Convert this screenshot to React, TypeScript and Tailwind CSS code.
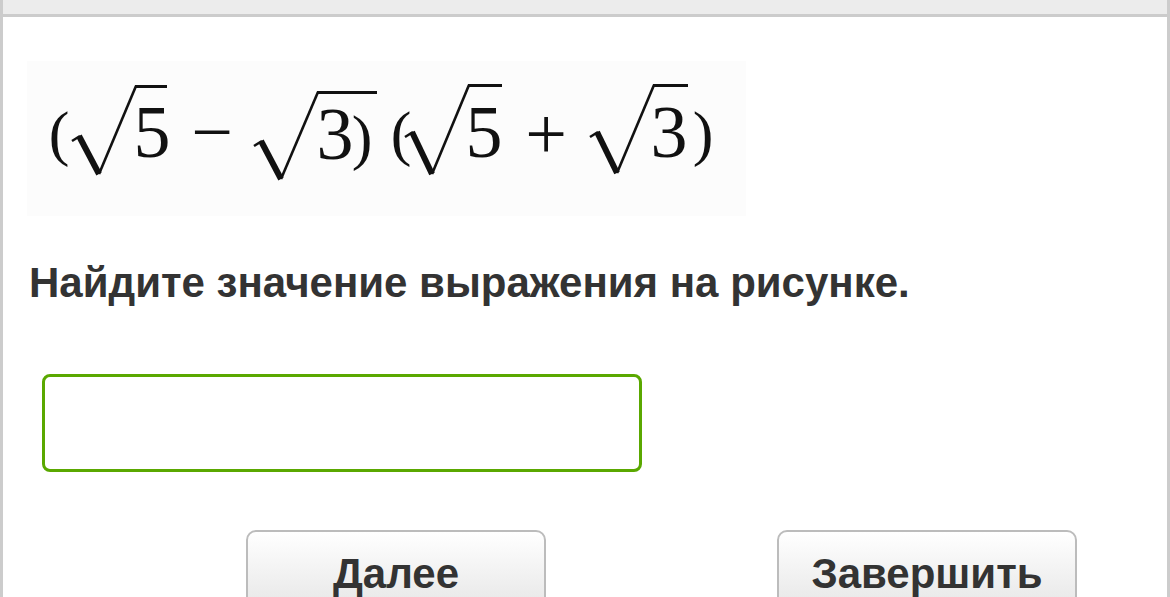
import React from "react";

const serif = { fontFamily: '"Liberation Serif", "Times New Roman", serif' };

// radical sign: tip at (x, y), apex at top, overline runs to end
function Radical({ x, y, top, bottom, end }: { x: number; y: number; top: number; bottom: number; end: number }) {
    const bx = x + 25;
    const tx = x + 62;
    return (
        <g stroke="#111" fill="none" strokeLinecap="butt">
            <path d={`M${x - 2},${y + 4} L${x + 6},${y - 1}`} strokeWidth={2.5} />
            <path d={`M${x + 5},${y - 1} L${bx},${bottom}`} strokeWidth={6} />
            <path d={`M${bx},${bottom} L${tx},${top + 1}`} strokeWidth={2.6} />
            <path d={`M${tx - 1},${top + 1.5} L${end},${top + 1.5}`} strokeWidth={3} />
        </g>
    );
}

function Formula() {
    return (
        <svg width={719} height={155} viewBox="27 61 719 155" className="block">
            <g fill="#111" style={serif}>
                <text x={59} y={154} fontSize={62} textAnchor="middle">(</text>
                <text x={152} y={157} fontSize={74} textAnchor="middle">5</text>
                <text x={212} y={157} fontSize={74} textAnchor="middle">−</text>
                <text x={335} y={159} fontSize={74} textAnchor="middle">3</text>
                <text x={362} y={158} fontSize={62} textAnchor="middle">)</text>
                <text x={401} y={154} fontSize={62} textAnchor="middle">(</text>
                <text x={484} y={157} fontSize={74} textAnchor="middle">5</text>
                <text x={546} y={159} fontSize={74} textAnchor="middle">+</text>
                <text x={669} y={157} fontSize={74} textAnchor="middle">3</text>
                <text x={703} y={154} fontSize={62} textAnchor="middle">)</text>
            </g>
            <Radical x={74} y={137} top={85} bottom={174} end={167} />
            <Radical x={256} y={142} top={91} bottom={179} end={377} />
            <Radical x={407} y={133} top={84} bottom={174} end={502} />
            <Radical x={592} y={133} top={84} bottom={173} end={688} />
        </svg>
    );
}

export default function App() {
    return (
        <div
            className="h-[597px] w-[1170px] overflow-hidden border-x-[3px] border-[#cccccc] bg-white"
            style={{ fontFamily: '"Liberation Sans", Arial, sans-serif' }}
        >
            <div className="h-[17px] border-b-[3px] border-[#cccccc] bg-[#ececec]" />

            <div className="ml-[24px] mt-[44px] w-[719px] bg-[#fcfcfc]">
                <Formula />
            </div>

            <div className="ml-[26px] mt-[43px] text-[42px] font-bold leading-[48px] text-[#333333]">
                Найдите значение выражения на рисунке.
            </div>

            <input
                type="text"
                className="ml-[39px] mt-[67px] block h-[98px] w-[600px] rounded-[8px] border-[3px] border-[#5aa800] bg-white outline-none"
            />

            <div className="ml-[243px] mt-[58px] flex gap-[231px]">
                <button className="h-[90px] w-[300px] rounded-[10px] border-2 border-[#bcbcbc] bg-gradient-to-b from-white to-[#e4e4e4] pb-[40px] pt-[18px] text-[42px] font-bold leading-[48px] text-[#333333]">
                    Далее
                </button>
                <button className="h-[90px] w-[300px] rounded-[10px] border-2 border-[#bcbcbc] bg-gradient-to-b from-white to-[#e4e4e4] pb-[40px] pt-[18px] text-[42px] font-bold leading-[48px] text-[#333333]">
                    Завершить
                </button>
            </div>
        </div>
    );
}
